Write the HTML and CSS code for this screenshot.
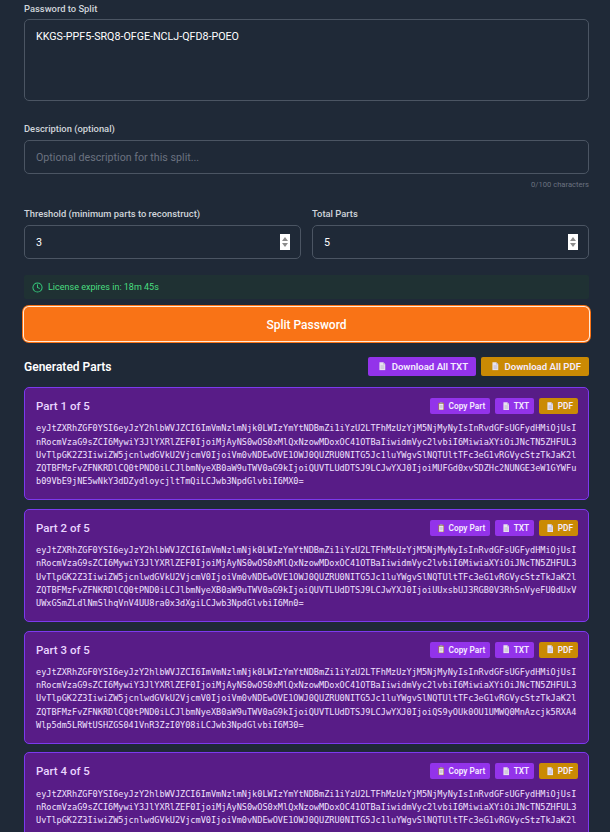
FILE: index.html

```html
<!DOCTYPE html>
<html>
<head>
<meta charset="utf-8">
<title>Split Password</title>
<link rel="stylesheet" href="styles.css">
</head>
<body>

<svg class="defs" width="0" height="0">
  <symbol id="doc" viewBox="0 0 8 10">
    <path d="M0.5 0H5.2L8 2.8V10H0.5Z" fill="#e7e2f0"/>
    <path d="M5.2 0V2.8H8Z" fill="#b9b3c6"/>
    <path d="M2 4.5H6.5M2 6H6.5M2 7.5H6.5" stroke="#a9a4b8" stroke-width=".6"/>
  </symbol>
  <symbol id="clip" viewBox="0 0 8 10">
    <rect x="0.5" y="0.8" width="7" height="9.2" rx=".6" fill="#a8794f"/>
    <rect x="1.4" y="2" width="5.2" height="7.2" fill="#eeeaf2"/>
    <rect x="2.5" y="0" width="3" height="1.8" fill="#9a9aa5"/>
    <path d="M2.2 4H5.8M2.2 5.4H5.8M2.2 6.8H5.8" stroke="#a9a4b8" stroke-width=".6"/>
  </symbol>
</svg>

<main class="page">

  <label class="label first">Password to Split</label>
  <textarea class="field secret" readonly>KKGS-PPF5-SRQ8-OFGE-NCLJ-QFD8-POEO</textarea>

  <label class="label desc">Description (optional)</label>
  <input class="field line" type="text" placeholder="Optional description for this split...">
  <div class="counter">0/100 characters</div>

  <div class="numbers">
    <div>
      <label class="label">Threshold (minimum parts to reconstruct)</label>
      <div class="field spin-field">
        <span>3</span>
        <svg class="spinner" viewBox="0 0 10 16"><rect width="10" height="16" fill="#fff"/><path d="M5 3L8 7H2Z M5 13L2 9H8Z" fill="#8c8c8c"/></svg>
      </div>
    </div>
    <div>
      <label class="label">Total Parts</label>
      <div class="field spin-field">
        <span>5</span>
        <svg class="spinner" viewBox="0 0 10 16"><rect width="10" height="16" fill="#fff"/><path d="M5 3L8 7H2Z M5 13L2 9H8Z" fill="#8c8c8c"/></svg>
      </div>
    </div>
  </div>

  <div class="license">
    <svg width="11" height="11" viewBox="0 0 24 24" fill="none" stroke="#34c77b" stroke-width="2.2" stroke-linecap="round"><circle cx="12" cy="12" r="10"/><path d="M12 6v6l4 2"/></svg>
    License expires in: 18m 45s
  </div>

  <button class="split">Split Password</button>

  <div class="parts-head">
    <h2>Generated Parts</h2>
    <div class="btns">
      <a class="btn big purple"><svg><use href="#doc"/></svg>Download All TXT</a>
      <a class="btn big gold"><svg><use href="#doc"/></svg>Download All PDF</a>
    </div>
  </div>

  <section class="part">
    <div class="part-head">
      <h3>Part 1 of 5</h3>
      <div class="btns">
        <a class="btn purple"><svg><use href="#clip"/></svg>Copy Part</a>
        <a class="btn purple"><svg><use href="#doc"/></svg>TXT</a>
        <a class="btn gold"><svg><use href="#doc"/></svg>PDF</a>
      </div>
    </div>
    <p class="code">eyJtZXRhZGF0YSI6eyJzY2hlbWVJZCI6ImVmNzlmNjk0LWIzYmYtNDBmZi1iYzU2LTFhMzUzYjM5NjMyNyIsInRvdGFsUGFydHMiOjUsInRocmVzaG9sZCI6MywiY3JlYXRlZEF0IjoiMjAyNS0wOS0xMlQxNzowMDoxOC41OTBaIiwidmVyc2lvbiI6MiwiaXYiOiJNcTN5ZHFUL3UvTlpGK2Z3IiwiZW5jcnlwdGVkU2VjcmV0IjoiVm0vNDEwOVE1OWJ0QUZRU0NITG5Jc1luYWgvSlNQTUltTFc3eG1vRGVycStzTkJaK2lZQTBFMzFvZFNKRDlCQ0tPND0iLCJlbmNyeXB0aW9uTWV0aG9kIjoiQUVTLUdDTSJ9LCJwYXJ0IjoiMUFGd0xvSDZHc2NUNGE3eW1GYWFub09VbE9jNE5wNkY3dDZydloycjltTmQiLCJwb3NpdGlvbiI6MX0=</p>
  </section>

  <section class="part">
    <div class="part-head">
      <h3>Part 2 of 5</h3>
      <div class="btns">
        <a class="btn purple"><svg><use href="#clip"/></svg>Copy Part</a>
        <a class="btn purple"><svg><use href="#doc"/></svg>TXT</a>
        <a class="btn gold"><svg><use href="#doc"/></svg>PDF</a>
      </div>
    </div>
    <p class="code">eyJtZXRhZGF0YSI6eyJzY2hlbWVJZCI6ImVmNzlmNjk0LWIzYmYtNDBmZi1iYzU2LTFhMzUzYjM5NjMyNyIsInRvdGFsUGFydHMiOjUsInRocmVzaG9sZCI6MywiY3JlYXRlZEF0IjoiMjAyNS0wOS0xMlQxNzowMDoxOC41OTBaIiwidmVyc2lvbiI6MiwiaXYiOiJNcTN5ZHFUL3UvTlpGK2Z3IiwiZW5jcnlwdGVkU2VjcmV0IjoiVm0vNDEwOVE1OWJ0QUZRU0NITG5Jc1luYWgvSlNQTUltTFc3eG1vRGVycStzTkJaK2lZQTBFMzFvZFNKRDlCQ0tPND0iLCJlbmNyeXB0aW9uTWV0aG9kIjoiQUVTLUdDTSJ9LCJwYXJ0IjoiUUxsbUJ3RGB0V3RhSnVyeFU0dUxVUWxGSmZLdlNmSlhqVnV4UU8ra0x3dXgiLCJwb3NpdGlvbiI6Mn0=</p>
  </section>

  <section class="part">
    <div class="part-head">
      <h3>Part 3 of 5</h3>
      <div class="btns">
        <a class="btn purple"><svg><use href="#clip"/></svg>Copy Part</a>
        <a class="btn purple"><svg><use href="#doc"/></svg>TXT</a>
        <a class="btn gold"><svg><use href="#doc"/></svg>PDF</a>
      </div>
    </div>
    <p class="code">eyJtZXRhZGF0YSI6eyJzY2hlbWVJZCI6ImVmNzlmNjk0LWIzYmYtNDBmZi1iYzU2LTFhMzUzYjM5NjMyNyIsInRvdGFsUGFydHMiOjUsInRocmVzaG9sZCI6MywiY3JlYXRlZEF0IjoiMjAyNS0wOS0xMlQxNzowMDoxOC41OTBaIiwidmVyc2lvbiI6MiwiaXYiOiJNcTN5ZHFUL3UvTlpGK2Z3IiwiZW5jcnlwdGVkU2VjcmV0IjoiVm0vNDEwOVE1OWJ0QUZRU0NITG5Jc1luYWgvSlNQTUltTFc3eG1vRGVycStzTkJaK2lZQTBFMzFvZFNKRDlCQ0tPND0iLCJlbmNyeXB0aW9uTWV0aG9kIjoiQUVTLUdDTSJ9LCJwYXJ0IjoiQS9yOUk0OU1UMWQ0MnAzcjk5RXA4Wlp5dm5LRWtUSHZGS041VnR3ZzI0Y08iLCJwb3NpdGlvbiI6M30=</p>
  </section>

  <section class="part">
    <div class="part-head">
      <h3>Part 4 of 5</h3>
      <div class="btns">
        <a class="btn purple"><svg><use href="#clip"/></svg>Copy Part</a>
        <a class="btn purple"><svg><use href="#doc"/></svg>TXT</a>
        <a class="btn gold"><svg><use href="#doc"/></svg>PDF</a>
      </div>
    </div>
    <p class="code">eyJtZXRhZGF0YSI6eyJzY2hlbWVJZCI6ImVmNzlmNjk0LWIzYmYtNDBmZi1iYzU2LTFhMzUzYjM5NjMyNyIsInRvdGFsUGFydHMiOjUsInRocmVzaG9sZCI6MywiY3JlYXRlZEF0IjoiMjAyNS0wOS0xMlQxNzowMDoxOC41OTBaIiwidmVyc2lvbiI6MiwiaXYiOiJNcTN5ZHFUL3UvTlpGK2Z3IiwiZW5jcnlwdGVkU2VjcmV0IjoiVm0vNDEwOVE1OWJ0QUZRU0NITG5Jc1luYWgvSlNQTUltTFc3eG1vRGVycStzTkJaK2l</p>
  </section>

</main>
</body>
</html>
```

FILE: styles.css

```css
html, body { margin: 0; height: 832px; overflow: hidden; background: #1f2937; }
body { font-family: Roboto, "Noto Sans", sans-serif; color: #fff; }
.defs { position: absolute; }
.page { padding: 1.5px 21px 0 24px; }

.label { display: block; font-size: 9.4px; font-weight: 500; line-height: 13px; margin-bottom: 5.5px; color: #d1d5db; }
.label.first { margin-bottom: 4.5px; }
.label.desc { margin-top: 21px; }

.field { display: block; box-sizing: border-box; width: 100%; background: #1f2937; border: 1px solid #4b5563; border-radius: 5px; color: #fff; font-family: inherit; font-size: 10.7px; outline: 0; margin: 0; }
.secret { height: 81.5px; padding: 9px 11px; line-height: 16px; resize: none; }
.line { height: 34px; padding: 0 11px; }
.line::placeholder { color: #6b7280; opacity: 1; }
.counter { font-size: 7.6px; line-height: 12px; margin-top: 4.5px; text-align: right; color: #6b7280; }

.numbers { display: grid; grid-template-columns: 277px 277px; gap: 11px; margin-top: 16px; }
.spin-field { display: flex; align-items: center; justify-content: space-between; height: 34px; padding: 0 10px 0 11px; }
.spinner { width: 10px; height: 16px; }

.license { display: flex; align-items: center; gap: 5px; height: 24px; margin-top: 16px; padding-left: 8px; background: #1f3133; border-radius: 2px; font-size: 9px; color: #4ade80; }

.split { display: block; width: 100%; height: 34px; margin-top: 8px; padding: 1px 0 0 0; border: 0; border-radius: 5px; background: #f97316; color: #fff; font-family: inherit; font-size: 12px; font-weight: 500; box-shadow: 0 0 0 1px #ffe9d6, 0 0 0 2px #f97316; }

.parts-head { display: flex; align-items: center; justify-content: space-between; margin-top: 16px; margin-bottom: 11px; }
h2 { margin: 0; font-size: 12px; font-weight: 600; }
.btns { display: flex; gap: 5px; }
.btn { display: flex; align-items: center; gap: 4.5px; height: 16px; padding: 0 5px 0 7.5px; border-radius: 2px; font-size: 8.3px; font-weight: 600; color: #f5ecff; white-space: nowrap; }
.btn svg { width: 6.5px; height: 8.5px; }
.btn.big { height: 19px; padding: 0 8px 0 11px; gap: 6px; font-size: 9.6px; font-weight: 600; }
.purple { background: #9333ea; }
.gold { background: #ca8a04; }

.part { box-sizing: border-box; height: 113.2px; margin-bottom: 8.6px; padding: 10px 10px 0 11px; background: #581c87; border: 1px solid #7c3aed; border-radius: 5px; }
.part-head { display: flex; align-items: center; justify-content: space-between; height: 16px; margin-bottom: 8.4px; }
h3 { margin: 0; font-size: 11.5px; font-weight: 500; color: #e9d5ff; }
.code { margin: 0; font-family: "DejaVu Sans Mono", monospace; font-size: 8.55px; line-height: 13.2px; word-break: break-all; color: #f0e2ff; }
```
